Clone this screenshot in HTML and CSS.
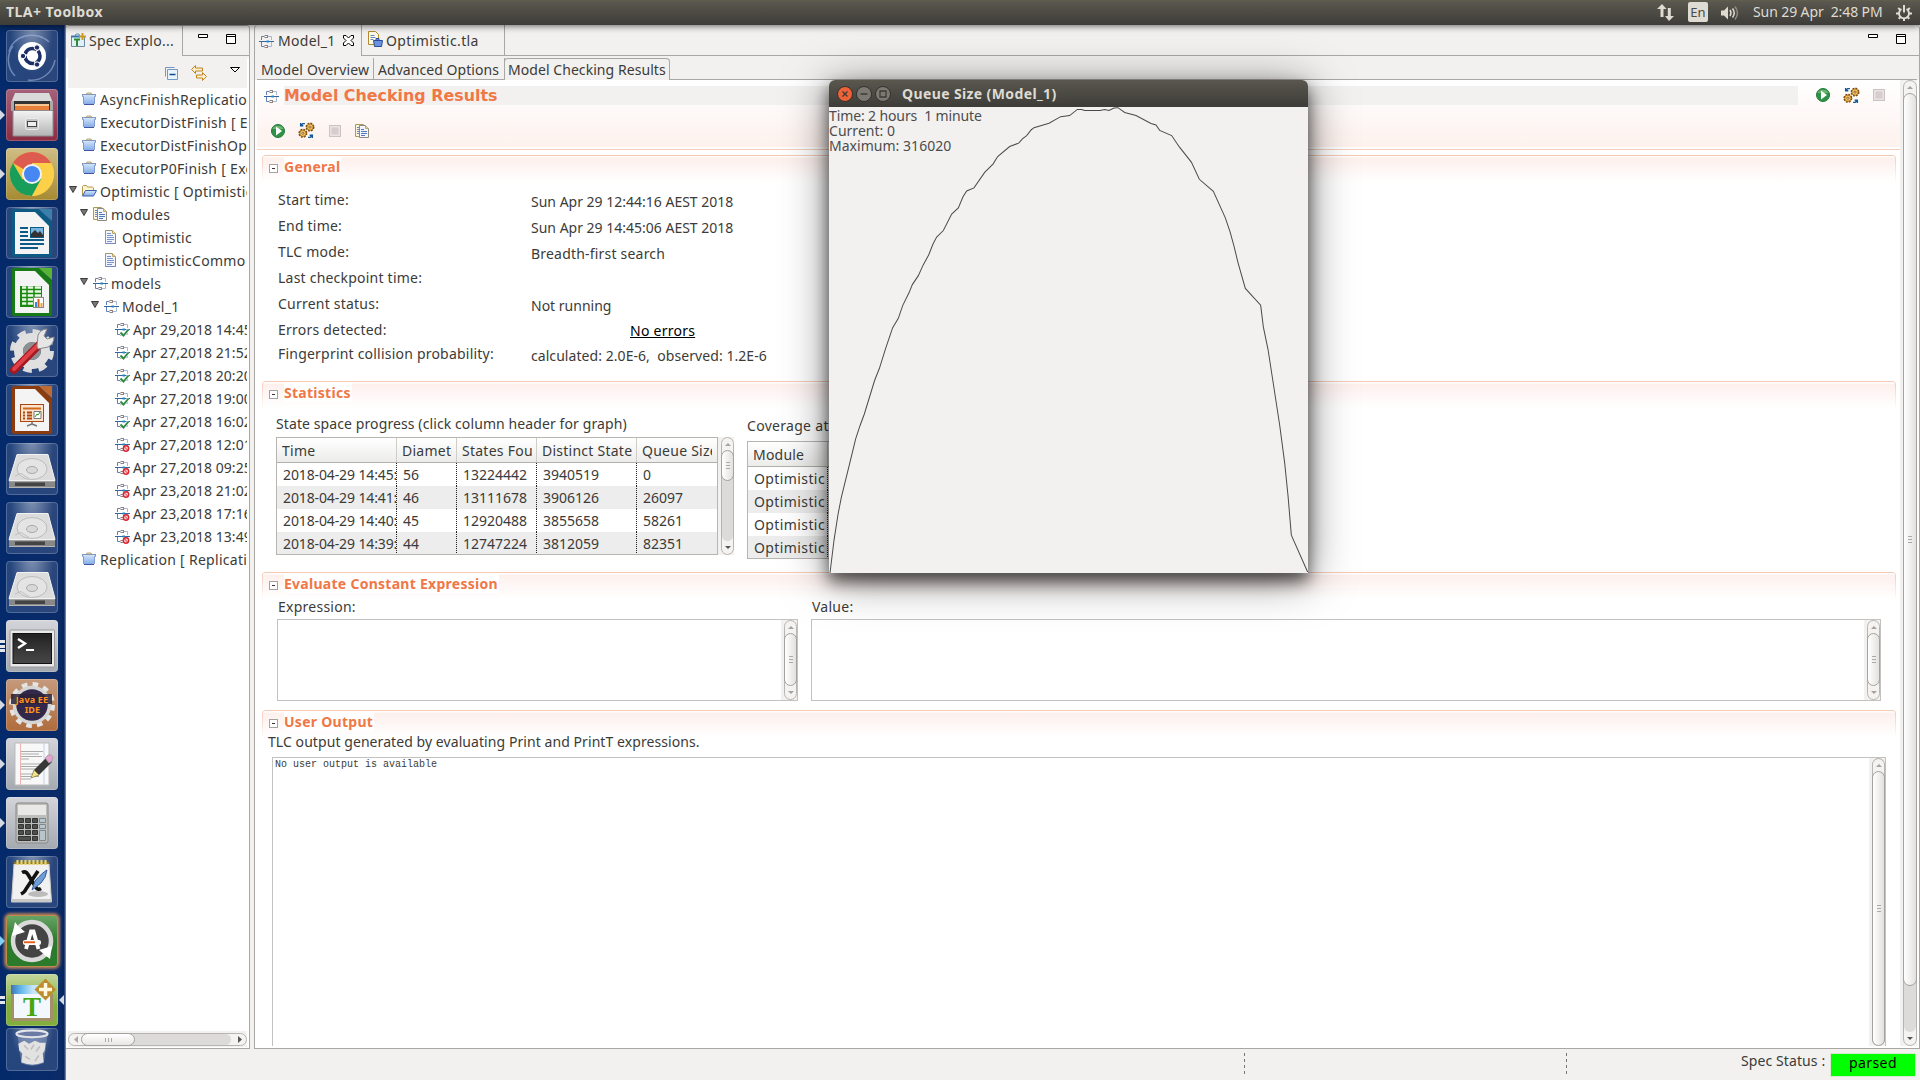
FILE: index.html
```html
<!DOCTYPE html>
<html lang="en">
<head>
<meta charset="utf-8">
<title>TLA+ Toolbox</title>
<link rel="stylesheet" href="styles.css">
</head>
<body>
<svg class="defs" width="0" height="0">
  <defs>
    <linearGradient id="g-metal" x1="0" y1="0" x2="0" y2="1"><stop offset="0" stop-color="#f4f4f4"/><stop offset="1" stop-color="#b4b4b4"/></linearGradient>
    <linearGradient id="g-folder" x1="0" y1="0" x2="0" y2="1"><stop offset="0" stop-color="#d4e8fb"/><stop offset="1" stop-color="#82a9e6"/></linearGradient>
    <linearGradient id="g-dark" x1="0" y1="0" x2="0" y2="1"><stop offset="0" stop-color="#222"/><stop offset="1" stop-color="#484848"/></linearGradient>
    <linearGradient id="g-fade" x1="0" y1="0" x2="1" y2="0"><stop offset="0" stop-color="#3f70b5"/><stop offset=".3" stop-color="#5fb4ea"/><stop offset=".7" stop-color="#c4e4f8"/></linearGradient>
  </defs>
  <symbol id="i-folder" viewBox="0 0 16 16"><path d="M5 3.500l1-1.500h4l1 1.500z" fill="#efe0b0" stroke="#b5a67c"/><path d="M1.500 3.500h13v2h-1v7l-1 1h-9l-1-1v-7h-1z" fill="url(#g-folder)" stroke="#7f98d0"/><path d="M3 13.500h10" stroke="#4356a5"/><path d="M1 3.500h14" stroke="#8797b8"/></symbol>
  <symbol id="i-open" viewBox="0 0 16 16"><path d="M1.500 12.500v-9l1-1h3l1 1.500h5l1 1v3" fill="#fdf5cf" stroke="#b8954f"/><path d="M1.500 13l3-5.500h11l-3 5.500z" fill="url(#g-folder)" stroke="#3d5fa8"/></symbol>
  <symbol id="i-doc" viewBox="0 0 16 16"><path d="M2.500 1.500h7l3 3v10h-10z" fill="#f3f7fd" stroke="#a0966c"/><path d="M2.500 14.500h10v-9" fill="none" stroke="#7788b8"/><path d="M9.500 1.500v3h3" fill="#e9d9a0" stroke="#bda768"/><path d="M4 4.500h4M4 6.500h6M4 8.500h7M4 10.500h7M4 12.500h5" stroke="#7b93cb"/></symbol>
  <symbol id="i-docs" viewBox="0 0 16 16"><path d="M1.500 1.500h8v12h-8z" fill="#fbf4da" stroke="#a89a5e"/><path d="M3 4.500h2M3 6.500h2M3 8.500h2M3 10.500h2" stroke="#6b87c4"/><path d="M5.500 2.500h6l3 3v9h-9z" fill="#f3f7fd" stroke="#8c8b80"/><path d="M11.500 2.500v3h3" fill="#e9d9a0" stroke="#bda768"/><path d="M7 6.500h3M7 8.500h6M7 10.500h6M7 12.500h4" stroke="#4f78c0"/></symbol>
  <symbol id="i-model" viewBox="0 0 16 16"><path d="M3.500 7V3.500H6M3.500 9V13.500H6" fill="none" stroke="#5f7fb8"/><path d="M10 3.500h3.500V7M10 13.500h3.500V9" fill="none" stroke="#a9b7d6"/><path d="M1 8.500h15" stroke="#35659f"/><rect x="7" y="2.500" width="2.500" height="2" fill="#fff" stroke="#92827e"/><rect x="7" y="12.500" width="2.500" height="2" fill="#fff" stroke="#92827e"/><rect x="8.500" y="7.500" width="2.500" height="2" fill="#2587c3"/></symbol>
  <symbol id="i-ok" viewBox="0 0 16 16"><use href="#i-model" width="16" height="16"/><path d="M6.500 11.500l3 3 5-6" fill="none" stroke="#fff" stroke-width="3"/><path d="M6.500 11.500l3 3 5-6" fill="none" stroke="#2c8a42" stroke-width="1.900"/></symbol>
  <symbol id="i-bad" viewBox="0 0 16 16"><use href="#i-model" width="16" height="16"/><circle cx="12" cy="12.500" r="2.700" fill="#fbd3d5" stroke="#dc2430" stroke-width="1.400"/><path d="M10.200 10.700l3.600 3.600" stroke="#dc2430"/></symbol>
  <symbol id="i-run" viewBox="0 0 16 16"><circle cx="8" cy="8" r="6.500" fill="#2f9247" stroke="#247a3c"/><path d="M2.500 6a6 5.500 0 0 1 11 0z" fill="#69b66f"/><path d="M6 3.500l6 4.500-6 4.500z" fill="#fff"/></symbol>
  <symbol id="i-gears" viewBox="0 0 16 16"><circle cx="11.300" cy="4.800" r="3.500" fill="#efb343" stroke="#7c4a12" stroke-width="1.500" stroke-dasharray="1.700 1.050"/><circle cx="11.300" cy="4.800" r="2.900" fill="#f8cb62" stroke="#8c5a1a" stroke-width=".6"/><circle cx="11.300" cy="4.800" r="1" fill="#fff" stroke="#7c4a12" stroke-width=".8"/><circle cx="4.600" cy="10.600" r="3.500" fill="#efb343" stroke="#7c4a12" stroke-width="1.500" stroke-dasharray="1.700 1.050"/><circle cx="4.600" cy="10.600" r="2.900" fill="#f8cb62" stroke="#8c5a1a" stroke-width=".6"/><circle cx="4.600" cy="10.600" r="1" fill="#fff" stroke="#7c4a12" stroke-width=".8"/><path d="M6.500 1.500H4.500L2.500 3.500M2.500 1v2.500h2.500M9.500 14.500h2l2-2M11 12.500h2.500v2.500" fill="none" stroke="#0f569b" stroke-width="1.300"/></symbol>
  <symbol id="i-stop" viewBox="0 0 12 12"><rect x=".5" y=".5" width="11" height="11" fill="#ebe3e3" stroke="#cbc3c3"/><rect x="2.500" y="2.500" width="7" height="7" fill="#d6cdcd"/></symbol>
  <symbol id="i-min" viewBox="0 0 10 4"><path d="M.5.5h9v3h-9z" fill="#fff" stroke="#000"/></symbol>
  <symbol id="i-max" viewBox="0 0 10 10"><path d="M.5.5h9v9h-9zM.5 2.500h9" fill="#fff" stroke="#000"/></symbol>
  <symbol id="i-up" viewBox="0 0 6 3"><path d="M0 3l3-3 3 3z" fill="currentColor"/></symbol>
  <symbol id="i-down" viewBox="0 0 6 3"><path d="M0 0h6l-3 3z" fill="currentColor"/></symbol>
  <symbol id="i-twist" viewBox="0 0 8 7"><path d="M.5.5h7l-3.500 6z" fill="#777" stroke="#3c3b37"/></symbol>
  <symbol id="i-disk" viewBox="0 0 52 52"><path d="M11 11.500h31l7 27v6.500h-46v-6.500z" fill="url(#g-metal)"/><path d="M11 11.500h31l7 26h-46z" fill="#dcdcdc" stroke="#f2f2f2"/><ellipse cx="26" cy="26" rx="15" ry="10.500" fill="#e4e4e4" stroke="#bcbcbc"/><ellipse cx="26" cy="27" rx="5.500" ry="3.500" fill="#d8d8d8" stroke="#aaa"/><path d="M9 33l6-2.500 8 5" fill="none" stroke="#c0c0c0"/><path d="M3 38.500h46v5.500h-46z" fill="#888"/><path d="M9 39.500h30v3.500h-30z" fill="#333" opacity=".8"/></symbol>
</svg>

<header class="topbar">
  <span class="topbar-title">TLA+ Toolbox</span>
  <svg class="net" width="17" height="17" viewBox="0 0 17 17"><path d="M5 0l4.500 5H6.500v8H3.500V5H0zM12 17l5-5h-3.200V4h-3v8H8z" fill="#dfdbd2"/></svg>
  <span class="lang">En</span>
  <svg class="vol" width="20" height="16" viewBox="0 0 20 16"><path d="M1 5.500h3l4-4v13l-4-4H1z" fill="#dfdbd2"/><path d="M10 5q2 3 0 6M12.500 3.500q3.500 4.500 0 9" fill="none" stroke="#dfdbd2" stroke-width="1.500"/><path d="M15 1.500q5 6.500 0 13" fill="none" stroke="#8d8a82" stroke-width="1.500"/></svg>
  <span class="clock">Sun 29 Apr&nbsp; 2:48 PM</span>
  <svg class="cog" width="16" height="16" viewBox="0 0 16 16"><g fill="none" stroke="#dfdbd2"><path d="M5.500 4a5 5 0 1 0 5 0" stroke-width="1.900"/><path d="M8 0v7.500" stroke-width="2"/><path d="M3.500 8.500H0M16 8.500h-3.500M4.700 11.800l-2 2M11.300 11.800l2 2M8 13v3M4.500 5l-2.300-2M11.500 5l2.300-2" stroke-width="2"/></g></svg>
</header>

<div class="shell">
<nav class="launcher">
  <div class="tile"><svg viewBox="0 0 52 52"><g fill="none" stroke="#a9bbe6" opacity=".55" stroke-width="1.500"><path d="M3 22a23 20 0 0 1 40-10M9 46a23 23 0 0 1-2-30M22 50a24 24 0 0 0 27-20"/></g><circle cx="26" cy="26" r="14" fill="#fff"/><circle cx="26.500" cy="26" r="7.500" fill="none" stroke="#1c2f66" stroke-width="3.500" stroke-dasharray="14.200 1.500" stroke-dashoffset="6"/><g fill="#1c2f66" stroke="#fff" stroke-width="1"><circle cx="17" cy="26" r="2.700"/><circle cx="31" cy="17.500" r="2.700"/><circle cx="31" cy="34.500" r="2.700"/></g></svg></div>
  <div class="tile t-red run"><svg viewBox="0 0 52 52"><path d="M9 4h34l4 10H5z" fill="#dadada"/><path d="M5 12h42v10H5z" fill="#aaa"/><path d="M8 12h36v10H8z" fill="#333"/><path d="M9 15h34v7H9z" fill="#f5c493"/><path d="M9 17h34v5H9z" fill="#e8803c"/><path d="M7 21.500h40V47H7z" fill="url(#g-metal)" stroke="#8d8d8d"/><rect x="19.500" y="29.500" width="13" height="11" rx="2" fill="#c4c4c4" stroke="#eee"/><rect x="21.500" y="32.500" width="9" height="5" fill="#eee" stroke="#444"/></svg></div>
  <div class="tile t-gold run"><svg viewBox="0 0 52 52"><circle cx="26" cy="26" r="22" fill="#fbc93b"/><path d="M26 26L6.900 15A22 22 0 0 1 45 15H26z" fill="#de5b50"/><path d="M6.900 15A22 22 0 0 0 26 48L35 31l-9-5-9.500 5.500z" fill="#189d5b"/><path d="M26 26L35.500 31.500 26 48A22 22 0 0 0 45 15H26z" fill="#fdd04a"/><circle cx="26" cy="26" r="10" fill="#f2f2f2"/><circle cx="26" cy="26" r="8" fill="#4687f1"/></svg></div>
  <div class="tile"><svg viewBox="0 0 52 52"><path d="M8 2h25l13 13v33a2 2 0 0 1-2 2H8a2 2 0 0 1-2-2V4a2 2 0 0 1 2-2z" fill="#0d5a85"/><path d="M33 2h13v12z" fill="#3b7fab"/><path d="M9 5h20l14 14v28H9z" fill="#f4f4f4"/><path d="M14 21h8M14 25h8M14 29h8M14 33h24M14 37h24M14 41h18" stroke="#0e5a86" stroke-width="1.800"/><rect x="24.500" y="20.500" width="13" height="10" fill="#77b4e0" stroke="#0d5a85"/><path d="M25 30v-3l4-4 3 3 2-2 3 4v2z" fill="#333"/></svg></div>
  <div class="tile"><svg viewBox="0 0 52 52"><path d="M8 2h25l13 13v33a2 2 0 0 1-2 2H8a2 2 0 0 1-2-2V4a2 2 0 0 1 2-2z" fill="#177a14"/><path d="M33 2h13v12z" fill="#58b531"/><path d="M9 5h20l14 14v28H9z" fill="#f4f4f4"/><path d="M14 20h22v21H14z" fill="#19880f"/><path d="M16 21.500h19M16 25.500h19M16 29.500h19M16 33.500h19M16 37.500h19" stroke="#e9f8e2" stroke-width="2.500"/><path d="M21 20v20M28 20v20" stroke="#19880f" stroke-width="1.500"/><rect x="27.500" y="31.500" width="10" height="10" fill="#fff" stroke="#888"/><path d="M30 36v5" stroke="#2b91d3" stroke-width="2"/><path d="M32.500 33v8" stroke="#e05a1e" stroke-width="2"/><path d="M35.500 37v4" stroke="#e8a33c" stroke-width="2"/></svg></div>
  <div class="tile"><svg viewBox="0 0 52 52"><circle cx="26" cy="26" r="18.500" fill="none" stroke="#dcdcdc" stroke-width="7" stroke-dasharray="8 6.530"/><circle cx="26" cy="26" r="13.500" fill="none" stroke="#e0e0e0" stroke-width="9"/><circle cx="26" cy="26" r="9" fill="#8d8f92"/><path d="M8 45L34 19" stroke="#a41920" stroke-width="8" stroke-linecap="round"/><path d="M8 44L33 19" stroke="#e04048" stroke-width="4" stroke-linecap="round"/><path d="M31 21l1-11q3-6 9-6l-3 7 3 3 7-2q0 7-6 10l-10 2z" fill="#e6e6e6" stroke="#8a8a8a"/></svg></div>
  <div class="tile"><svg viewBox="0 0 52 52"><path d="M8 2h25l13 13v33a2 2 0 0 1-2 2H8a2 2 0 0 1-2-2V4a2 2 0 0 1 2-2z" fill="#8c3b0e"/><path d="M33 2h13v12z" fill="#c06a33"/><path d="M9 5h20l14 14v28H9z" fill="#f4f4f4"/><rect x="14.500" y="20.500" width="23" height="17" fill="#fde3cd" stroke="#a9470f"/><path d="M17 24.500h18" stroke="#d1691c" stroke-width="2"/><path d="M17 28.500h2M17 31.500h2M17 34.500h2M21 28.500h5M21 31.500h5M21 34.500h5" stroke="#a9470f" stroke-width="2"/><path d="M28 27.500h7v7h-7z" fill="#fff" stroke="#777"/><path d="M29 33l2-3 1 1 2-3" fill="none" stroke="#2a9a1a"/><path d="M26 38v2l-5 2M26 40l5 2" fill="none" stroke="#777" stroke-width="1.500"/></svg></div>
  <div class="tile"><svg><use href="#i-disk"/></svg></div>
  <div class="tile"><svg><use href="#i-disk"/></svg></div>
  <div class="tile"><svg><use href="#i-disk"/></svg></div>
  <div class="tile t-grey many"><svg viewBox="0 0 52 52"><rect x="4" y="10" width="44.500" height="37" rx="1" fill="#e9e9e9" stroke="#999"/><rect x="7" y="13.500" width="38.500" height="30" fill="url(#g-dark)" stroke="#111"/><path d="M12 19l7 4.500-7 4.500" fill="none" stroke="#fff" stroke-width="2.400"/><path d="M20 30h8" stroke="#fff" stroke-width="2"/></svg></div>
  <div class="tile t-brown run"><svg viewBox="0 0 52 52"><circle cx="26" cy="26" r="20" fill="none" stroke="#e4e4e4" stroke-width="6" stroke-dasharray="5.400 5.070"/><circle cx="26" cy="26" r="17.500" fill="#32294a" stroke="#d5d5d5" stroke-width="3.500"/><path d="M5 15h41v10H5z" fill="#2c2238" opacity=".85"/><g class="ide" text-anchor="middle"><text x="26" y="23.500">Java EE</text><text x="26.500" y="33.500">IDE</text></g></svg></div>
  <div class="tile t-grey run"><svg viewBox="0 0 52 52"><path d="M9 5h34v42H9z" fill="#f8f8f8" stroke="#bbb"/><path d="M14.500 5v42" stroke="#f2b2b2"/><path d="M38 5v42" stroke="#c4cef0"/><path d="M15 13.500h22M15 16h18M15 18.500h21M15 21h8M15 26h22M15 28.500h20M15 31h15M15 36h14M15 38.500h18M15 41h10" stroke="#aaa" stroke-width="1"/><path d="M25 40l3-8 13-13 5 5-13 13z" fill="#383838"/><path d="M25 40l3-8 5 5z" fill="#f0e28e" stroke="#8a7c30" stroke-width=".6"/><path d="M39 20l3-3q3-1 5 2l-1 4-3 2z" fill="#e7a3cf" stroke="#999" stroke-width=".7"/></svg></div>
  <div class="tile t-grey run"><svg viewBox="0 0 52 52"><rect x="10" y="6" width="32" height="40" rx="2" fill="#bdbdbb" stroke="#888"/><rect x="12" y="8" width="28" height="10" fill="#e8e8e6"/><g fill="#4d514d" stroke="#333"><path d="M12.500 21.500h5v4h-5zM19.500 21.500h5v4h-5zM26.500 21.500h5v4h-5zM12.500 27.500h5v4h-5zM19.500 27.500h5v4h-5zM26.500 27.500h5v4h-5zM12.500 33.500h5v4h-5zM19.500 33.500h5v4h-5zM26.500 33.500h5v4h-5zM12.500 39.500h12v4h-12zM26.500 39.500h5v4h-5z"/></g><path d="M33.500 21.500h6v4h-6zM33.500 27.500h6v4h-6zM33.500 33.500h6v10h-6z" fill="#b7c6cd" stroke="#7d898e"/></svg></div>
  <div class="tile"><svg viewBox="0 0 52 52"><path d="M8 8h35l2.500 38h-40z" fill="#f1f1f1" stroke="#ccc"/><path d="M5.500 43h40v3h-40z" fill="#c8c8c8"/><ellipse cx="32" cy="38" rx="10" ry="3" fill="#bbb"/><path d="M8 7h35" stroke="#8d7a2c" stroke-width="2"/><path d="M12 4v5M16 4v5M20 4v5M24 4v5M28 4v5M32 4v5M36 4v5M40 4v5" transform="translate(-.5 0)" stroke="#e8d26a" stroke-width="2.200"/><path d="M16 16.500q4-2 6 2l8 13q2 3 5 1M32 15L20 33q-1 3-5 5" fill="none" stroke="#111" stroke-width="3.600"/><path d="M26 34l3-9q8-9 12-11-1 8-6 13z" fill="#6d9ed6" stroke="#3a5f98"/></svg></div>
  <div class="tile t-green run-blue"><svg viewBox="0 0 52 52"><circle cx="26" cy="26" r="19" fill="#444" stroke="#d9d9d9" stroke-width="4.500"/><path d="M6 21l3-14 3 4 7 6zM46 31l-2 13-4-3-7-6z" fill="#fff"/><path d="M20 34l5-17.500h2.500l5 17.500" fill="none" stroke="#fff" stroke-width="3.800"/><rect x="17" y="25" width="18" height="5" rx="2" fill="#fff"/><rect x="18" y="26.300" width="11" height="1.900" fill="#e65f1a"/></svg></div>
  <div class="tile t-lime two"><svg viewBox="0 0 52 52"><path d="M5 11h31v9H5z" fill="url(#g-fade)"/><path d="M5 20h42v27H5z" fill="#a3906a"/><path d="M8 20h36v24H8z" fill="#f2f8fd"/><path d="M39.500 4.500l10.500 11-10.500 11-11-11z" fill="#bd8d2b"/><path d="M39.500 9v13M33 15.500h13" stroke="#fff7e0" stroke-width="3.500"/><text x="26" y="41.500" text-anchor="middle" font-family="Liberation Serif, serif" font-weight="bold" font-size="27" fill="#47a510">T</text></svg></div>
  <div class="tile trash"><svg viewBox="0 0 52 44"><path d="M11 6h31l-4 30q-12 5-23 0z" fill="#8fa0c4" opacity=".5"/><ellipse cx="26" cy="6" rx="16" ry="3.500" fill="#6b7ba5" stroke="#e4e6ea" stroke-width="2"/><path d="M12 16l6-3 5 3 6-3 5 2 6 0-1 8-2 3 1 9q-12 5-23 0l1-9-3-3z" fill="#e2e2e2"/><path d="M18 18l4 4M28 17l-3 5M34 19l-4 5M19 29l5 3M33 28l-4 6" fill="none" stroke="#bcbcbc" stroke-width="1.500"/></svg></div>
</nav>

<div class="bench">
<div class="panels">
<aside class="explorer">
  <div class="view-tabs">
    <div class="view-tab"><svg class="i16" viewBox="0 0 16 16"><path d="M5 3l1-2h3l1 2M1.500 3.500h13v10h-13z" fill="#dff0f7" stroke="#6d8aa5"/><path d="M1 3.500h9" stroke="#3d76b5" stroke-width="2"/><path d="M4 6.500h6M7 6v7" stroke="#2f8a31" stroke-width="2"/><path d="M12.500 0v7M9 3.500h7" stroke="#c99a25" stroke-width="2"/></svg><span>Spec Explo...</span></div>
    <div class="view-ctl"><svg width="10" height="4"><use href="#i-min"/></svg><svg width="10" height="10"><use href="#i-max"/></svg></div>
  </div>
  <div class="view-tools">
    <svg width="13" height="13" viewBox="0 0 13 13"><path d="M.5 9.500v-9h9" fill="none" stroke="#6f9ac3"/><path d="M2.500 2.500h10v10h-10z" fill="#e8f3fc" stroke="#6f9ac3"/><path d="M4.500 7.500h6" stroke="#104b8c" stroke-width="1.500"/></svg>
    <svg width="16" height="16" viewBox="0 0 16 16"><path d="M.5 4.500l4-4v2.500h7v3h-7v2.500zM15.500 11.500l-4-4v2.500h-6v3h6v2.500z" fill="#fdf0cf" stroke="#c08422"/></svg>
    <svg class="tri" width="10" height="6" viewBox="0 0 10 6"><path d="M.5.5h9l-4.500 4.500z" fill="#fff" stroke="#000"/></svg>
  </div>
  <ul class="tree">
    <li class="d0"><b></b><svg class="i16"><use href="#i-folder"/></svg>AsyncFinishReplicatio</li>
    <li class="d0"><b></b><svg class="i16"><use href="#i-folder"/></svg>ExecutorDistFinish [ Ex</li>
    <li class="d0"><b></b><svg class="i16"><use href="#i-folder"/></svg>ExecutorDistFinishOp</li>
    <li class="d0"><b></b><svg class="i16"><use href="#i-folder"/></svg>ExecutorP0Finish [ Exe</li>
    <li class="d0"><b><svg><use href="#i-twist"/></svg></b><svg class="i16"><use href="#i-open"/></svg>Optimistic [ Optimistic</li>
    <li class="d1"><b><svg><use href="#i-twist"/></svg></b><svg class="i16"><use href="#i-docs"/></svg>modules</li>
    <li class="d2"><b></b><svg class="i16"><use href="#i-doc"/></svg>Optimistic</li>
    <li class="d2"><b></b><svg class="i16"><use href="#i-doc"/></svg>OptimisticCommo</li>
    <li class="d1"><b><svg><use href="#i-twist"/></svg></b><svg class="i16"><use href="#i-model"/></svg>models</li>
    <li class="d2"><b><svg><use href="#i-twist"/></svg></b><svg class="i16"><use href="#i-model"/></svg>Model_1</li>
    <li class="d3"><b></b><svg class="i16"><use href="#i-ok"/></svg>Apr 29,2018 14:45</li>
    <li class="d3"><b></b><svg class="i16"><use href="#i-ok"/></svg>Apr 27,2018 21:52</li>
    <li class="d3"><b></b><svg class="i16"><use href="#i-ok"/></svg>Apr 27,2018 20:20</li>
    <li class="d3"><b></b><svg class="i16"><use href="#i-ok"/></svg>Apr 27,2018 19:00</li>
    <li class="d3"><b></b><svg class="i16"><use href="#i-ok"/></svg>Apr 27,2018 16:02</li>
    <li class="d3"><b></b><svg class="i16"><use href="#i-bad"/></svg>Apr 27,2018 12:01</li>
    <li class="d3"><b></b><svg class="i16"><use href="#i-bad"/></svg>Apr 27,2018 09:25</li>
    <li class="d3"><b></b><svg class="i16"><use href="#i-bad"/></svg>Apr 23,2018 21:02</li>
    <li class="d3"><b></b><svg class="i16"><use href="#i-bad"/></svg>Apr 23,2018 17:16</li>
    <li class="d3"><b></b><svg class="i16"><use href="#i-bad"/></svg>Apr 23,2018 13:49</li>
    <li class="d0"><b></b><svg class="i16"><use href="#i-folder"/></svg>Replication [ Replicatio</li>
  </ul>
  <div class="hbar-wrap"><div class="hbar">
    <svg class="harrow off" width="4" height="7" viewBox="0 0 4 7"><path d="M4 0v7L0 3.500z" fill="currentColor"/></svg>
    <div class="hthumb"><i></i><i></i><i></i></div>
    <div class="hfill"></div>
    <svg class="harrow" width="4" height="7" viewBox="0 0 4 7"><path d="M0 0v7l4-3.500z" fill="currentColor"/></svg>
  </div></div>
</aside>

<main class="editor">
  <div class="ed-tabs">
    <div class="ed-tab active"><svg class="i16"><use href="#i-model"/></svg><span>Model_1</span><svg class="close" width="11" height="11" viewBox="0 0 11 11"><path d="M.5.500h2.500l2.500 2.500 2.500-2.500h2.500v2.500L8 5.500l2.500 2.500v2.500H8L5.500 8 3 10.500H.5V8L3 5.500.5 3z" fill="#fff" stroke="#000"/></svg></div>
    <div class="ed-tab second"><svg class="i16" viewBox="0 0 16 16"><path d="M1.500.5h7l3 3v10h-10z" fill="#fffbe8" stroke="#b28b2e"/><path d="M3.500 4.500h4M3.500 6.500h5M3.500 8.500h3" stroke="#6b87c4"/><path d="M9 9V7.500h3V9M6.500 9.500h9l-1 6h-7z" fill="#6d92dd" stroke="#2c4b9c"/></svg><span>Optimistic.tla</span></div>
    <div class="view-ctl ed-ctl"><svg width="10" height="4"><use href="#i-min"/></svg><svg width="10" height="10"><use href="#i-max"/></svg></div>
  </div>
  <div class="form-tabs">
    <div class="form-tab ft1">Model Overview</div>
    <div class="form-tab ft2">Advanced Options</div>
    <div class="form-tab ft3">Model Checking Results</div>
    <div class="form-rest"></div>
  </div>
  <div class="form">
    <div class="form-body">
      <div class="form-head">
        <div class="head-row">
          <svg class="i16"><use href="#i-model"/></svg>
          <h1>Model Checking Results</h1>
          <div class="head-tools"><svg width="16" height="16"><use href="#i-run"/></svg><svg width="17" height="17"><use href="#i-gears"/></svg><svg width="12" height="12"><use href="#i-stop"/></svg></div>
        </div>
        <div class="tool-row"><svg width="16" height="16"><use href="#i-run"/></svg><svg width="17" height="17"><use href="#i-gears"/></svg><svg width="12" height="12"><use href="#i-stop"/></svg><svg width="16" height="16"><use href="#i-docs"/></svg></div>
      </div>

      <section class="sec s-general">
        <h2><i class="fold"></i><span>General</span></h2>
        <dl>
          <dt>Start time:</dt><dd>Sun Apr 29 12:44:16 AEST 2018</dd>
          <dt>End time:</dt><dd>Sun Apr 29 14:45:06 AEST 2018</dd>
          <dt>TLC mode:</dt><dd class="words">Breadth-first search</dd>
          <dt>Last checkpoint time:</dt><dd></dd>
          <dt>Current status:</dt><dd>Not running</dd>
          <dt>Errors detected:</dt><dd class="link"><a>No errors</a></dd>
          <dt class="wide">Fingerprint collision probability:</dt><dd>calculated: 2.0E-6,&nbsp; observed: 1.2E-6</dd>
        </dl>
      </section>

      <section class="sec s-stats">
        <h2><i class="fold"></i><span>Statistics</span></h2>
        <div class="stats">
          <div class="stat-col">
            <div class="cap">State space progress (click column header for graph)</div>
            <div class="table-row">
              <div class="table progress">
                <div class="tr th"><span>Time</span><span>Diamete</span><span>States Fou</span><span>Distinct State</span><span>Queue Size</span></div>
                <div class="tr"><span>2018-04-29 14:45:</span><span>56</span><span>13224442</span><span>3940519</span><span>0</span></div>
                <div class="tr alt"><span>2018-04-29 14:41:</span><span>46</span><span>13111678</span><span>3906126</span><span>26097</span></div>
                <div class="tr"><span>2018-04-29 14:40:</span><span>45</span><span>12920488</span><span>3855658</span><span>58261</span></div>
                <div class="tr alt"><span>2018-04-29 14:39:</span><span>44</span><span>12747224</span><span>3812059</span><span>82351</span></div>
              </div>
              <div class="vtrack"><div class="vbar"><div class="cap-up"><svg><use href="#i-up"/></svg></div><div class="vthumb t-short"><i></i><i></i><i></i></div><div class="vfill"></div><div class="cap-dn on"><svg><use href="#i-down"/></svg></div></div></div>
            </div>
          </div>
          <div class="stat-col cover">
            <div class="cap">Coverage at</div>
            <div class="table coverage">
              <div class="tr th"><span>Module</span><span></span></div>
              <div class="tr"><span>Optimistic</span><span></span></div>
              <div class="tr alt"><span>Optimistic</span><span></span></div>
              <div class="tr"><span>Optimistic</span><span></span></div>
              <div class="tr alt"><span>Optimistic</span><span></span></div>
            </div>
          </div>
        </div>
      </section>

      <section class="sec s-eval">
        <h2><i class="fold"></i><span>Evaluate Constant Expression</span></h2>
        <div class="eval">
          <div class="field"><label>Expression:</label><div class="box"><div class="vtrack"><div class="vbar"><div class="cap-up"><svg><use href="#i-up"/></svg></div><div class="vthumb grow"><i></i><i></i><i></i></div><div class="cap-dn"><svg><use href="#i-down"/></svg></div></div></div></div></div>
          <div class="field"><label>Value:</label><div class="box"><div class="vtrack"><div class="vbar"><div class="cap-up"><svg><use href="#i-up"/></svg></div><div class="vthumb grow"><i></i><i></i><i></i></div><div class="cap-dn"><svg><use href="#i-down"/></svg></div></div></div></div></div>
        </div>
      </section>

      <section class="sec s-out">
        <h2><i class="fold"></i><span>User Output</span></h2>
        <p>TLC output generated by evaluating Print and PrintT expressions.</p>
        <div class="box out"><pre>No user output is available</pre><div class="vtrack"><div class="vbar open"><div class="cap-up"><svg><use href="#i-up"/></svg></div><div class="vthumb grow"><i></i><i></i><i></i></div></div></div></div>
      </section>
    </div>
    <div class="vtrack main-track"><div class="vbar"><div class="cap-up"><svg><use href="#i-up"/></svg></div><div class="vthumb t-main"><i></i><i></i><i></i></div><div class="vfill"></div><div class="cap-dn on"><svg><use href="#i-down"/></svg></div></div></div>
  </div>
</main>
</div>
<footer class="status">
  <i class="dots a"></i><i class="dots b"></i>
  <span class="status-label">Spec Status :</span><span class="parsed">parsed</span>
</footer>
</div>
</div>

<div class="window">
  <div class="titlebar">
    <svg width="56" height="18" viewBox="0 0 56 18"><g stroke="#33322e"><circle cx="9" cy="9" r="7.500" fill="#ee6238"/><circle cx="28" cy="9" r="7.500" fill="#7b7972"/><circle cx="47" cy="9" r="7.500" fill="#7b7972"/></g><path d="M6.500 6.500l5 5M11.500 6.500l-5 5M24.500 9h7M44 6h6v6h-6z" fill="none" stroke="#3c3b37" stroke-width="1.300"/></svg>
    <span>Queue Size (Model_1)</span>
  </div>
  <div class="plot">
    <svg class="curve" viewBox="57 136 1437 1354" preserveAspectRatio="none"><polyline fill="none" stroke="#4a4a48" stroke-width="3" points="60,1490 72,1395 84,1320 94,1270 120,1168 137,1100 150,1062 163,1028 194,930 208,896 226,840 248,777 265,750 278,713 297,676 307,652 325,626 340,594 356,566 369,534 380,514 400,495 425,447 445,429 459,397 470,380 492,371 524,326 549,302 563,280 599,251 626,241 638,228 650,219 664,202 672,196 717,183 752,164 779,161 802,143 815,143 824,146 870,146 884,143 897,146 912,139 924,138 944,152 978,161 1023,184 1038,188 1049,204 1085,219 1108,252 1144,296 1168,346 1210,381 1246,458 1260,498 1272,540 1284,588 1306,663 1352,712 1360,775 1374,840 1390,940 1409,1060 1424,1170 1434,1265 1444,1380 1493,1487"/></svg>
    <div class="legend"><div class="elapsed">Time: 2 hours&nbsp; 1 minute</div><div>Current: 0</div><div>Maximum: 316020</div></div>
  </div>
</div>
</body>
</html>
```
FILE: styles.css
```css
* { box-sizing: border-box; }
body {
  margin: 0; width: 1920px; height: 1080px; overflow: hidden; position: relative;
  display: flex; flex-direction: column; background: #f2f1f0; color: #3c3b37;
  font: 14px/20px "Noto Sans", "Liberation Sans", sans-serif; letter-spacing: .1px; white-space: nowrap;
}
svg { display: block; flex: none; }
.defs { position: absolute; }
.i16 { width: 16px; height: 16px; }

/* top bar */
.topbar {
  height: 25px; flex: none; display: flex; align-items: center; padding: 0 8px 0 6px; z-index: 2;
  background: linear-gradient(#62604f 0, #59574e 2px, #3d3c38); color: #dfdbd2;
  box-shadow: 0 1px 7px rgba(0,0,0,.6); line-height: 23px;
}
.topbar-title { font-weight: bold; letter-spacing: .47px; margin: -2px auto 0 0; }
.net { margin-right: 14px; }
.lang { width: 20px; height: 20px; margin: -1px 12px 0 0; background: #dfdbd2; color: #4b4a45; border-radius: 2px; font-size: 13px; line-height: 20px; text-align: center; }
.vol { margin-right: 13px; }
.clock { width: 130px; letter-spacing: -.1px; margin: -2px 13px 0 0; }

.shell { flex: 1; display: flex; min-height: 0; }

/* launcher */
.launcher { width: 66px; flex: none; padding: 5px 0 0 6px; background: linear-gradient(90deg, #042a6b, #0b2b68 60px, #062458 64px, #4a6396 65px, #8b97ac 66px); display: flex; flex-direction: column; gap: 7px; }
.tile {
  width: 52px; height: 52px; flex: none; border-radius: 4px; position: relative;
  background: radial-gradient(ellipse at 50% -10%, rgba(255,255,255,.5), rgba(255,255,255,.13) 60%);
  box-shadow: inset 0 0 0 1px rgba(255,255,255,.2); 
}
.tile svg { width: 52px; height: 52px; }
.t-red { background: linear-gradient(#a4627a, #8c2c42); }
.t-gold { background: linear-gradient(#d0be86, #a68a32); }
.t-grey { background: linear-gradient(#d4d5da, #a4a9b0); }
.t-brown { background: linear-gradient(#c59a7c, #b06c3c); }
.ide { font: bold 9px "Noto Sans", sans-serif; fill: #ff9020; letter-spacing: .2px; }
.t-green { background: linear-gradient(#6aa468, #2c7a2c 50%); box-shadow: 0 0 3px 2px #b07c5c, inset 0 0 0 1px #c08c4c; }
.t-lime { background: linear-gradient(#c4d69c, #83ae3e 60%); }
.trash { height: 43px; margin-top: -5px; }
.trash svg { height: 43px; }
.run::before, .run-blue::before { content: ""; position: absolute; left: -6px; top: 21px; border: 5px solid transparent; border-left-color: #d5d9e2; border-right: 0; }
.run-blue::before { border-left-color: #7fd0f2; }
.many::before, .two::before { content: ""; position: absolute; left: -6px; top: 20px; width: 5px; height: 12px; background: repeating-linear-gradient(#e4e6ea 0 3px, transparent 3px 4.500px); }
.two::before { height: 8px; top: 22px; background: repeating-linear-gradient(#e4e6ea 0 3px, transparent 3px 5px); }
.two::after { content: ""; position: absolute; right: -6px; top: 21px; border: 5px solid transparent; border-right-color: #d5d9e2; border-left: 0; }

/* workbench */
.bench { flex: 1; display: flex; flex-direction: column; min-width: 0; }
.panels { height: 1024px; display: flex; gap: 4px; }
.explorer { width: 184px; border: 1px solid #a9a7a4; border-left: 0; border-radius: 4px 4px 0 0; padding: 0 2px; background: #fff; display: flex; flex-direction: column; overflow: hidden; }
.view-tabs { height: 32px; margin: 0 -2px; display: flex; align-items: flex-start; background: #f2f1f0; flex: none; }
.view-tab { width: 116px; height: 32px; padding: 0 0 3px 4px; display: flex; align-items: center; gap: 3px; letter-spacing: .25px; }
.view-ctl { flex: 1; height: 30px; border: 1px solid #a9a7a4; border-width: 0 0 1px 1px; padding: 8px 0 0 15px; display: flex; gap: 18px; align-items: flex-start; }
.view-tools { height: 30px; background: #f2f1f0; padding: 0 7px 0 97px; display: flex; align-items: center; flex: none; }
.view-tools svg { margin-right: 13px; }
.view-tools .tri { margin: 0 0 6px auto; }
.tree { list-style: none; margin: 0; padding: 0; flex: 1; overflow: hidden; }
.tree li { height: 23px; line-height: 23px; display: flex; align-items: center; letter-spacing: .3px; }
.tree b { width: 12px; height: 12px; flex: none; }
.tree b svg { width: 8px; height: 7px; }
.tree .i16 { margin-right: 3px; margin-top: -1px; }
.d0 { padding-left: 1px; } .d1 { padding-left: 12px; } .d2 { padding-left: 23px; }
.tree .d3 { padding-left: 34px; letter-spacing: .03px; }
.hbar-wrap { height: 16px; background: #f2f1f0; padding-top: 2px; margin-bottom: 1px; flex: none; }
.hbar { height: 13px; border: 1px solid #b8b5b1; border-radius: 7px; background: #f4f3f2; display: flex; align-items: center; padding: 0 5px; color: #555; }
.hthumb { width: 54px; height: 13px; margin-left: 3px; border: 1px solid #a5a29e; border-radius: 7px; background: linear-gradient(#fff, #e8e7e5); display: flex; justify-content: center; align-items: center; gap: 2px; z-index: 1; }
.hthumb i { width: 1px; height: 4px; background: #aaa; }
.hfill { flex: 1; height: 11px; margin: 0 7px 0 -8px; background: #dddbd9; border-radius: 0 6px 6px 0; }
.harrow:last-child { margin-right: -1px; }
.off { color: #aaa; }

/* editor */
.editor { flex: 1; border: 1px solid #a9a7a4; border-radius: 4px 4px 0 0; border-top: 0; display: flex; flex-direction: column; min-width: 0; }
.ed-tabs { height: 31px; display: flex; flex: none; }
.ed-tab { display: flex; align-items: center; border-right: 1px solid #a9a7a4; }
.active { width: 107px; padding-left: 3px; height: 31px; }
.active span { margin: 0 7px 0 4px; letter-spacing: .3px; }
.second { width: 143px; padding: 1px 0 0 5px; gap: 3px; border-bottom: 1px solid #a9a7a4; letter-spacing: .4px; }
.second .i16 { margin-top: -3px; }
.ed-ctl { height: 31px; border-left: 0; justify-content: flex-end; padding: 9px 13px 0 0; }
.form-tabs { height: 24px; padding: 2px 2px 0; display: flex; flex: none; }
.form-tab { border-bottom: 1px solid #a9a7a4; border-right: 1px solid #a9a7a4; line-height: 23px; padding-left: 4px; }
.ft1 { width: 117px; letter-spacing: .16px; } .ft2 { width: 131px; letter-spacing: .06px; }
.ft3 { width: 166px; border: 1px solid #a9a7a4; border-bottom: 0; border-radius: 4px 4px 0 0; line-height: 22px; padding-left: 3px; margin-left: -1px; letter-spacing: .06px; }
.form-rest { flex: 1; border-bottom: 1px solid #a9a7a4; }
.form { flex: 1; min-height: 0; display: flex; padding: 0 2px; background: #fff; }
.form-body { flex: 1; min-width: 0; display: flex; flex-direction: column; overflow: hidden; margin-bottom: 2px; }
.form-head { height: 70px; flex: none; border-bottom: 1px solid #f5cdbb; box-shadow: inset 0 -2px #fff; background: linear-gradient(#fff, #fdf1ed); }
.head-row { display: flex; align-items: center; padding: 6px 0 0 6px; }
.head-row .i16 { margin-right: 5px; }
h1 { margin: 0; width: 1514px; height: 19px; background: #f2f1f0; color: #f07746; font: bold 15.900px/20px "DejaVu Sans", sans-serif; letter-spacing: 0; }
.head-tools { display: flex; align-items: center; gap: 12px; margin: -1px 0 0 17px; }
.head-tools svg:last-child { margin-left: 1px; }
.tool-row { display: flex; align-items: center; padding: 17px 0 0 13px; }
.tool-row svg:nth-child(2) { margin: 0 14px 0 12px; }
.tool-row svg:last-child { margin-left: 13px; }

.sec {
  margin: 0 4px 0 5px; flex: none; border-top: 1px solid #f7c9b5; border-radius: 4px 4px 0 0;
  background: linear-gradient(#f7c9b5, #fff 27px) 0 0/1px 27px no-repeat, linear-gradient(#f7c9b5, #fff 27px) 100% 0/1px 27px no-repeat, linear-gradient(#fff 1px, #fdf0ed 2px, #fff 26px);
}
h2 { margin: 1px 0 0 7px; height: 20px; display: flex; align-items: center; gap: 6px; font-size: 14px; line-height: 19px; color: #f07746; letter-spacing: .27px; }
h2 span { background: #fff; padding-right: 1px; margin-top: -1px; }
.fold { width: 9px; height: 9px; border: 1px solid #a5a3a0; margin-top: 3px; background: linear-gradient(#333, #333) center/3px 1px no-repeat #fff; }
.s-general { height: 226px; margin-top: 5px; }
.s-stats { height: 191px; }
.s-eval { height: 138px; }
.s-out { height: 340px; }
dl { margin: 10px 0 0 16px; display: grid; grid-template-columns: 253px 1fr; grid-template-rows: repeat(6, 26px) 22px; line-height: 26px; }
dt { margin: 0; letter-spacing: .22px; } dd { margin: 2px 0 0; letter-spacing: 0; }
dt.wide { letter-spacing: .21px; line-height: 22px; }
dd.words { letter-spacing: .2px; }
dt.wide + dd { margin-top: 0; line-height: 26px; letter-spacing: .06px; }
dd.link { padding-left: 99px; margin-top: 1px; }
dd a { color: #000; text-decoration: underline; letter-spacing: .25px; }

.stats { display: flex; gap: 13px; padding: 11px 0 0 14px; }
.cap { height: 20px; padding-bottom: 3px; }
.stat-col:first-child .cap { height: 23px; }
.cover { padding-top: 2px; }
.stat-col.cover .cap { height: 25px; padding-left: 0; letter-spacing: .3px; }
.table-row { display: flex; }
.table { border: 1px solid #b8b5b1; background: #fff; }
.tr { display: grid; height: 23px; line-height: 24px; letter-spacing: 0; }
.progress .tr { grid-template-columns: 120px 60px 80px 100px 80px; }
.progress .tr:not(.th) span:first-child { letter-spacing: -.12px; }
.progress { width: 442px; height: 118px; overflow: hidden; }
.coverage { width: 400px; height: 118px; overflow: hidden; letter-spacing: .4px; }
.coverage .tr { grid-template-columns: 80px 320px; letter-spacing: .4px; }
.tr span { overflow: hidden; padding-left: 6px; border-right: 1px dotted #222; }
.tr span:last-child { border-right: 0; }
.alt { background: #ededed; }
.th { height: 25px; line-height: 25px; border-bottom: 1px solid #b3b0ac; }
.progress .th { letter-spacing: .25px; }
.tr.th span { padding: 0; margin: 0 5px; border: 0; }
.progress .th { background: linear-gradient(90deg, transparent 119px, #d0cdc9 119px 120px, transparent 120px 179px, #d0cdc9 179px 180px, transparent 180px 259px, #d0cdc9 259px 260px, transparent 260px 359px, #d0cdc9 359px 360px, transparent 360px), linear-gradient(#fff, #ececeb); }
.coverage .th { background: linear-gradient(90deg, transparent 79px, #d0cdc9 79px 80px, transparent 80px), linear-gradient(#fff, #ececeb); letter-spacing: .2px; }

/* scrollbars */
.vtrack { background: #f2f1f0; padding-left: 3px; display: flex; flex: none; }
.vbar { width: 13px; border: 1px solid #b8b5b1; border-radius: 7px; background: #f4f3f2; display: flex; flex-direction: column; align-items: stretch; }
.cap-up, .cap-dn { height: 13px; flex: none; display: flex; align-items: center; justify-content: center; color: #a5a3a0; }
.cap-up.on, .cap-dn.on { color: #555; }
.cap-up svg, .cap-dn svg { width: 6px; height: 3px; }
.vthumb { margin: 0 -1px; border: 1px solid #a5a29e; border-radius: 7px; background: linear-gradient(90deg, #fff, #e2e1df); display: flex; flex-direction: column; align-items: center; justify-content: center; gap: 2px; z-index: 1; }
.vthumb i { width: 4px; height: 1px; background: #aaa; }
.t-short { height: 31px; margin-top: -1px; }
.t-main { height: 893px; margin-top: -1px; }
.grow { flex: 1; }
.box .grow { margin-top: -1px; }
.vfill { flex: 1; background: #dddbd9; margin-top: -8px; border-radius: 0 0 6px 6px; }
.open { border-bottom: 0; }

.eval { display: flex; gap: 13px; padding: 3px 15px 0 15px; }
.field:first-child { width: 521px; }
.field:last-child { flex: 1; }
.field label { display: block; height: 22px; padding-left: 1px; letter-spacing: .25px; }
.box { height: 82px; border: 1px solid #c4c2bf; background: #fff; display: flex; justify-content: flex-end; }
.s-out p { margin: 0 0 0 6px; height: 25px; line-height: 20px; letter-spacing: .07px; }
.out { height: 300px; margin: 0 10px; border-bottom: 0; justify-content: space-between; }
.out .vtrack { height: 288px; }
pre { margin: 0; padding: 1px 0 0 2px; font: 10px/12px "Liberation Mono", monospace; letter-spacing: 0; }
.main-track { margin-bottom: 2px; }
.main-track .vbar { width: 14px; }

/* status bar */
.status { flex: 1; display: flex; align-items: flex-start; padding: 4px 4px 0 0; }
.dots { width: 1px; height: 23px; background: repeating-linear-gradient(#77756f 0 3px, transparent 3px 6px); }
.dots.a { margin-left: 1178px; } .dots.b { margin-left: 321px; }
.status-label { margin: -2px 0 0 auto; width: 89px; line-height: 20px; }
.parsed { width: 86px; height: 24px; background: #0f0; border: 1px solid #d8e8d0; color: #000; text-align: center; line-height: 18px; letter-spacing: .4px; }

/* floating graph window */
.window { position: absolute; z-index: 3; left: 829px; top: 80px; width: 479px; height: 493px; border-radius: 6px 6px 0 0; box-shadow: 0 8px 16px rgba(0,0,0,.6), 0 6px 45px rgba(0,0,0,.5); }
.titlebar { height: 27px; border-radius: 6px 6px 0 0; background: linear-gradient(#59574e, #3d3c38); color: #dfdbd2; font-weight: bold; letter-spacing: .38px; display: flex; align-items: center; gap: 10px; padding: 0 0 0 7px; }
.plot { height: 466px; background: #f2f1f0; display: grid; }
.curve, .legend { grid-area: 1 / 1; }
.curve { width: 479px; height: 466px; }
.legend { line-height: 15px; padding-top: 1px; color: #4c4c4c; letter-spacing: .03px; }
.elapsed { letter-spacing: -.12px; }
```
